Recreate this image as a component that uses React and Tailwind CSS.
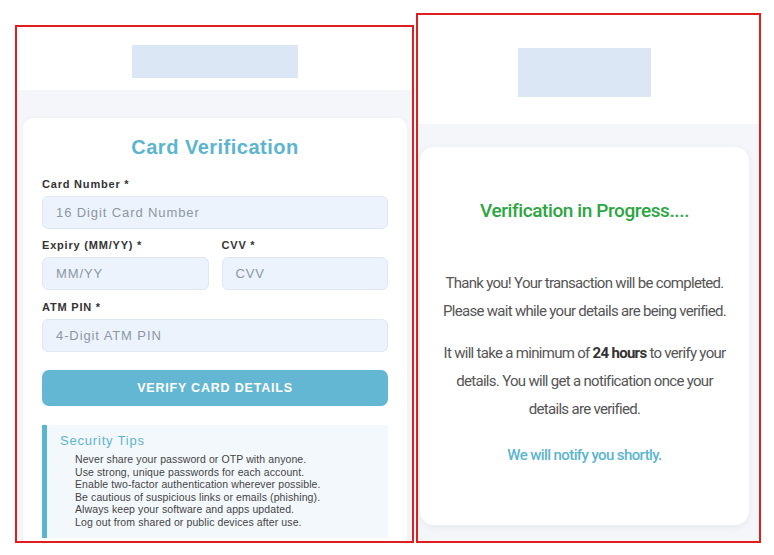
import React from "react";

const tips = [
  "Never share your password or OTP with anyone.",
  "Use strong, unique passwords for each account.",
  "Enable two-factor authentication wherever possible.",
  "Be cautious of suspicious links or emails (phishing).",
  "Always keep your software and apps updated.",
  "Log out from shared or public devices after use.",
];

function Field({ label, placeholder }) {
  return (
    <div className="flex flex-col">
      <label className="text-[11px] leading-[16px] font-bold tracking-[0.8px] text-[#333]">
        {label}
      </label>
      <div className="mt-[4px] h-[33px] rounded-[6px] border border-[#dfe7f3] bg-[#edf3fc] px-[13px] flex items-center text-[13px] tracking-[0.9px] text-[#8b97a6]">
        {placeholder}
      </div>
    </div>
  );
}

function CardForm() {
  return (
    <div className="ml-[15px] mt-[25px] w-[399px] h-[518px] border-2 border-[#e11d1d] overflow-hidden flex flex-col font-['Liberation_Sans',Arial,sans-serif]">
      {/* Header */}
      <header className="h-[63px] shrink-0 bg-white flex justify-center pt-[18px] shadow-[0_1px_3px_rgba(0,0,0,0.04)]">
        <div className="w-[166px] h-[33px] bg-[#dbe7f4]" />
      </header>

      {/* Body */}
      <main className="flex-1 bg-[#f4f6f9] pt-[28px] pl-[6px] pr-[5px]">
        <div className="bg-white rounded-[10px] px-[19px] pt-[15px] pb-[20px] shadow-[0_0_4px_rgba(0,0,0,0.03)]">
          <h1 className="text-center text-[20px] leading-[28px] font-bold tracking-[0.5px] text-[#5bb5cf]">
            Card Verification
          </h1>

          <div className="mt-[15px]">
            <Field label="Card Number *" placeholder="16 Digit Card Number" />
          </div>

          <div className="mt-[8px] grid grid-cols-2 gap-[13px]">
            <Field label="Expiry (MM/YY) *" placeholder="MM/YY" />
            <Field label="CVV *" placeholder="CVV" />
          </div>

          <div className="mt-[9px]">
            <Field label="ATM PIN *" placeholder="4-Digit ATM PIN" />
          </div>

          <button className="mt-[18px] w-full h-[36px] rounded-[7px] bg-[#63b7d2] text-white text-[12.5px] font-bold tracking-[0.8px]">
            VERIFY CARD DETAILS
          </button>

          {/* Security tips */}
          <div className="mt-[19px] border-l-[5px] border-[#5bb5cf] bg-[#f3f8fd] pl-[13px] pt-[8px] pb-[9px]">
            <h2 className="text-[13px] leading-[16px] tracking-[0.8px] text-[#5bb5cf]">
              Security Tips
            </h2>
            <ul className="mt-[4px] pl-[15px] list-none">
              {tips.map((t) => (
                <li
                  key={t}
                  className="text-[10.5px] leading-[12.6px] tracking-[0.1px] text-[#444]"
                >
                  {t}
                </li>
              ))}
            </ul>
          </div>
        </div>
      </main>
    </div>
  );
}

function Progress() {
  return (
    <div className="ml-[2px] mt-[13px] w-[345px] h-[530px] border-2 border-[#e11d1d] overflow-hidden flex flex-col font-['Roboto',sans-serif]">
      {/* Header */}
      <header className="h-[109px] shrink-0 bg-white flex justify-center pt-[33px] pr-[9px] shadow-[0_1px_4px_rgba(0,0,0,0.04)]">
        <div className="w-[133px] h-[49px] bg-[#dbe7f4]" />
      </header>

      <main className="flex-1 bg-[#f4f6f9] pt-[23px] pl-[2px] pr-[10px]">
        <div className="h-[378px] bg-white rounded-[14px] shadow-[0_2px_8px_rgba(0,0,0,0.06)] pt-[50px] text-center">
          <h1 className="text-[19px] leading-[28px] font-medium tracking-[-0.4px] text-[#2ba640]">
            Verification in Progress....
          </h1>

          <p className="mt-[44px] text-[15px] leading-[28px] tracking-[-0.7px] text-[#555] whitespace-nowrap">
            Thank you! Your transaction will be completed.
            <br />
            Please wait while your details are being verified.
          </p>

          <p className="mt-[14px] text-[15px] leading-[28px] tracking-[-0.7px] text-[#555] whitespace-nowrap">
            It will take a minimum of{" "}
            <span className="font-bold text-[#333]">24 hours</span> to verify
            your
            <br />
            details. You will get a notification once your
            <br />
            details are verified.
          </p>

          <p className="mt-[18px] text-[15px] leading-[28px] font-medium tracking-[-0.6px] text-[#5bb5cf]">
            We will notify you shortly.
          </p>
        </div>
      </main>
    </div>
  );
}

export default function App() {
  return (
    <div className="w-[774px] h-[555px] bg-white flex items-start overflow-hidden">
      <CardForm />
      <Progress />
    </div>
  );
}
